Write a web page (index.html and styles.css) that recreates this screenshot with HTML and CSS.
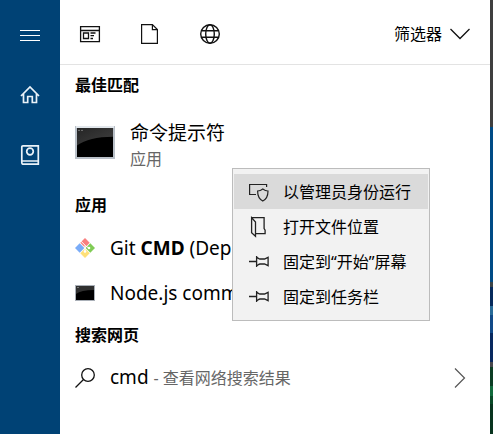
FILE: index.html
```html
<!DOCTYPE html>
<html lang="zh-CN">
<head>
<meta charset="utf-8">
<meta name="viewport" content="width=device-width, initial-scale=1">
<title>搜索</title>
<link rel="stylesheet" href="styles.css">
</head>
<body>
<div class="shell">
  <nav class="rail">
    <button class="rail-button" type="button" aria-label="菜单">
      <svg width="20" height="20" viewBox="0 0 20 20" stroke="#fff"><path d="M0 5.500h20M0 10.500h20M0 15.500h20"/></svg>
    </button>
    <button class="rail-button" type="button" aria-label="主页">
      <svg width="20" height="20" viewBox="0 0 20 20" fill="none" stroke="#eaf2f8" stroke-width="1.7"><path d="M1 11 10 2l9 9M3.500 9v8.500h4.200v-6h4.600v6h4.200V9"/></svg>
    </button>
    <button class="rail-button" type="button" aria-label="笔记本">
      <svg width="20" height="22" viewBox="0 0 20 22" fill="none" stroke="#eaf2f8" stroke-width="1.7"><path d="M3 1.800h15.300v18.400H3.500Q1.800 20.200 1.800 18.500V3Q1.800 1.800 3 1.800ZM2 17h16"/><circle cx="10" cy="7.500" r="3.300"/></svg>
    </button>
  </nav>

  <main class="panel">
    <header class="toolbar">
      <button class="tool" type="button" aria-label="应用">
        <svg width="22" height="22" viewBox="0 0 22 22" fill="none" stroke="#111" stroke-width="1.300"><path d="M1.600 3.600h18.800v15H1.600ZM1.600 7.500h18.800"/><path d="M4.500 10h5v5.500h-5ZM11.500 10h5M11.500 12.700h3.500M11.500 15.500h2.500"/></svg>
      </button>
      <button class="tool" type="button" aria-label="文档">
        <svg width="22" height="22" viewBox="0 0 22 22" fill="none" stroke="#111" stroke-width="1.200"><path d="M2.600 1.600h10.800l5 5v13.800H2.600ZM13.400 1.600v5h5"/></svg>
      </button>
      <button class="tool" type="button" aria-label="网页">
        <svg width="22" height="22" viewBox="0 0 22 22" fill="none" stroke="#111" stroke-width="1.400"><circle cx="11" cy="11" r="9.300"/><ellipse cx="11" cy="11" rx="4.300" ry="9.300"/><path d="M2.500 7.700h17M2.500 14.300h17"/></svg>
      </button>
      <button class="filter" type="button">筛选器
        <svg width="20" height="12" viewBox="0 0 20 12" fill="none" stroke="#111" stroke-width="1.300"><path d="m.500 1 9.500 9.500L19.500 1"/></svg>
      </button>
    </header>

    <h2 class="heading">最佳匹配</h2>
    <div class="best">
      <svg class="best-icon" width="40" height="33" viewBox="0 0 40 34" preserveAspectRatio="none">
        <defs><linearGradient id="gloss" x1="0" y1="0" x2="1" y2="1"><stop offset="0" stop-color="#252525"/><stop offset="1" stop-color="#414141"/></linearGradient></defs>
        <path fill="#b9c0c8" d="M0 0h40v34H0z"/><path fill="#e2e7ec" d="M1 0h38v2H1z"/><path fill="#000" d="M2 2h36v30H2z"/>
        <path fill="url(#gloss)" d="M2 2h36v9Q14 11 2 20z"/><path stroke="#777" d="M3 4.500h2M6 4.500h2"/>
      </svg>
      <div class="best-text">
        <div class="best-name">命令提示符</div>
        <div class="best-kind">应用</div>
      </div>
      <ul class="menu" role="menu">
        <li><button class="menu-item active" type="button" role="menuitem">
          <svg width="22" height="22" viewBox="0 0 22 22" fill="none" stroke="#222" stroke-width="1.200"><path d="M8 13.500H1.600v-10h17V6"/><path d="M14.800 8q2.500 2 5.200 2c0 5-1.200 8-5.200 10-4-2-5.200-5-5.200-10q2.700 0 5.200-2Z"/></svg>以管理员身份运行</button></li>
        <li><button class="menu-item" type="button" role="menuitem">
          <svg width="22" height="22" viewBox="0 0 22 22" fill="none" stroke="#222" stroke-width="1.300"><path d="M3.600 1.600h12.500v11l1 1.500v3.500H8M3.600 1.600 7.500 6v14.300l-3.900-3.500Z"/></svg>打开文件位置</button></li>
        <li><button class="menu-item" type="button" role="menuitem">
          <svg width="22" height="22" viewBox="0 0 22 22" fill="none" stroke="#222" stroke-width="1.300"><path d="M1 10.500h7.500M8.600 5v11M8.600 6.500c1.400 0 1.900 1.500 3.400 1.500h4.500l3.600-1.700v8.400L16.500 13H12c-1.500 0-2 1.500-3.400 1.500"/></svg>固定到“开始”屏幕</button></li>
        <li><button class="menu-item" type="button" role="menuitem">
          <svg width="22" height="22" viewBox="0 0 22 22" fill="none" stroke="#222" stroke-width="1.300"><path d="M1 10.500h7.500M8.600 5v11M8.600 6.500c1.400 0 1.900 1.500 3.400 1.500h4.500l3.600-1.700v8.400L16.500 13H12c-1.500 0-2 1.500-3.400 1.500"/></svg>固定到任务栏</button></li>
      </ul>
    </div>

    <h2 class="heading">应用</h2>
    <a class="row" href="#">
      <svg width="20" height="20" viewBox="0 0 20 20">
        <path fill="#f97f7f" d="m10 0 4.700 4.700L10 9.400 5.300 4.700z"/><path fill="#7aacf8" d="m4.700 5.300 4.700 4.700-4.700 4.700L0 10z"/><path fill="#80cc55" d="m15.300 5.300L20 10l-4.700 4.700-4.700-4.700z"/><path fill="#ffe078" d="m10 10.600 4.700 4.700L10 20l-4.700-4.700z"/>
        <path stroke="#fff" fill="none" d="m6 3.200 4 4V13M10 7.500l3 2"/><circle cx="10" cy="13.500" r="1.300" fill="#fff"/><circle cx="14" cy="10" r="1.300" fill="#fff"/>
      </svg>
      <span class="row-name">Git <b>CMD</b> (Dep</span>
    </a>
    <a class="row" href="#">
      <svg width="20" height="16" viewBox="0 0 20 16"><path fill="#aab0b8" d="M0 0h20v16H0z"/><path fill="#000" d="M1 1h18v14H1z"/><path fill="#303030" d="M1 1h18v4Q6 5 1 9z"/><path stroke="#777" d="M2 2.500h2"/></svg>
      <span class="row-name">Node.js comm</span>
    </a>

    <h2 class="heading">搜索网页</h2>
    <a class="row" href="#">
      <svg width="20" height="20" viewBox="0 0 20 20" fill="none" stroke="#111" stroke-width="1.300"><circle cx="13" cy="7" r="6.300"/><path d="m8.500 11.500-8 8"/></svg>
      <span class="row-name">cmd <span class="row-note">- 查看网络搜索结果</span></span>
      <svg width="12" height="20" viewBox="0 0 12 20" fill="none" stroke="#555" stroke-width="1.200"><path d="m1 .500 9.500 9.500L1 19.500"/></svg>
    </a>
  </main>

  <div class="desktop"></div>
</div>
</body>
</html>
```
FILE: styles.css
```css
* {
  box-sizing: border-box;
}

body {
  margin: 0;
  color: #000;
  font-family: "Noto Sans", "Noto Sans CJK SC", sans-serif;
  font-size: 16px;
  line-height: 24px;
}

button {
  border: 0;
  padding: 0;
  background: none;
  color: inherit;
  font: inherit;
}

svg {
  display: block;
  flex: none;
}

.shell {
  display: grid;
  grid-template-columns: 60px minmax(0, 1fr) 3px;
  min-height: 100vh;
}

.rail {
  padding-top: 5px;
  background: #004275;
}

.rail-button {
  display: grid;
  place-items: center;
  width: 100%;
  height: 60px;
}

.panel {
  background: #fff;
}

.toolbar {
  display: flex;
  align-items: center;
  gap: 38px;
  height: 65px;
  padding: 3px 20px 0 19px;
  border-bottom: 1px solid #e3e3e3;
}

.filter {
  display: flex;
  align-items: center;
  gap: 8px;
  margin-left: auto;
}

.heading {
  margin: 0;
  padding: 8px 15px;
  font-size: 16px;
  font-weight: 700;
}

.best {
  position: relative;
  display: flex;
  align-items: flex-start;
  gap: 15px;
  height: 80px;
  padding: 14px 15px;
}

.best-icon {
  margin-top: 7px;
}

.best-name {
  font-size: 19px;
  line-height: 28px;
}

.best-kind {
  color: #666;
}

.menu {
  position: absolute;
  top: 63px;
  left: 172px;
  z-index: 1;
  width: 198px;
  margin: 0;
  padding: 5px 1px 6px;
  border: 1px solid #bcbcbc;
  background: #f2f2f2;
  list-style: none;
}

.menu-item {
  display: flex;
  align-items: center;
  gap: 13px;
  width: 100%;
  height: 35px;
  padding-left: 14px;
  text-align: left;
}

.menu-item.active {
  background: #dadada;
}

.row {
  display: flex;
  align-items: center;
  gap: 15px;
  height: 45px;
  padding: 0 24px 0 15px;
  color: inherit;
  text-decoration: none;
}

.row-name {
  flex: 1;
  overflow: hidden;
  font-size: 19px;
  white-space: nowrap;
}

.row-note {
  color: #666;
  font-size: 16px;
}

.desktop {
  background: linear-gradient(
    #3f3f3f 0 127px,
    #004b86 127px 282px,
    #3c4448 282px 287px,
    #062a5c 287px 306px,
    #286b98 306px 315px,
    #124a88 315px 333px,
    #08295f 333px 362px,
    #48474c 362px 367px,
    #0c3d24 367px 386px,
    #126a3c 386px 396px,
    #0a4a28 396px 404px,
    #08341f 404px
  );
}
```
